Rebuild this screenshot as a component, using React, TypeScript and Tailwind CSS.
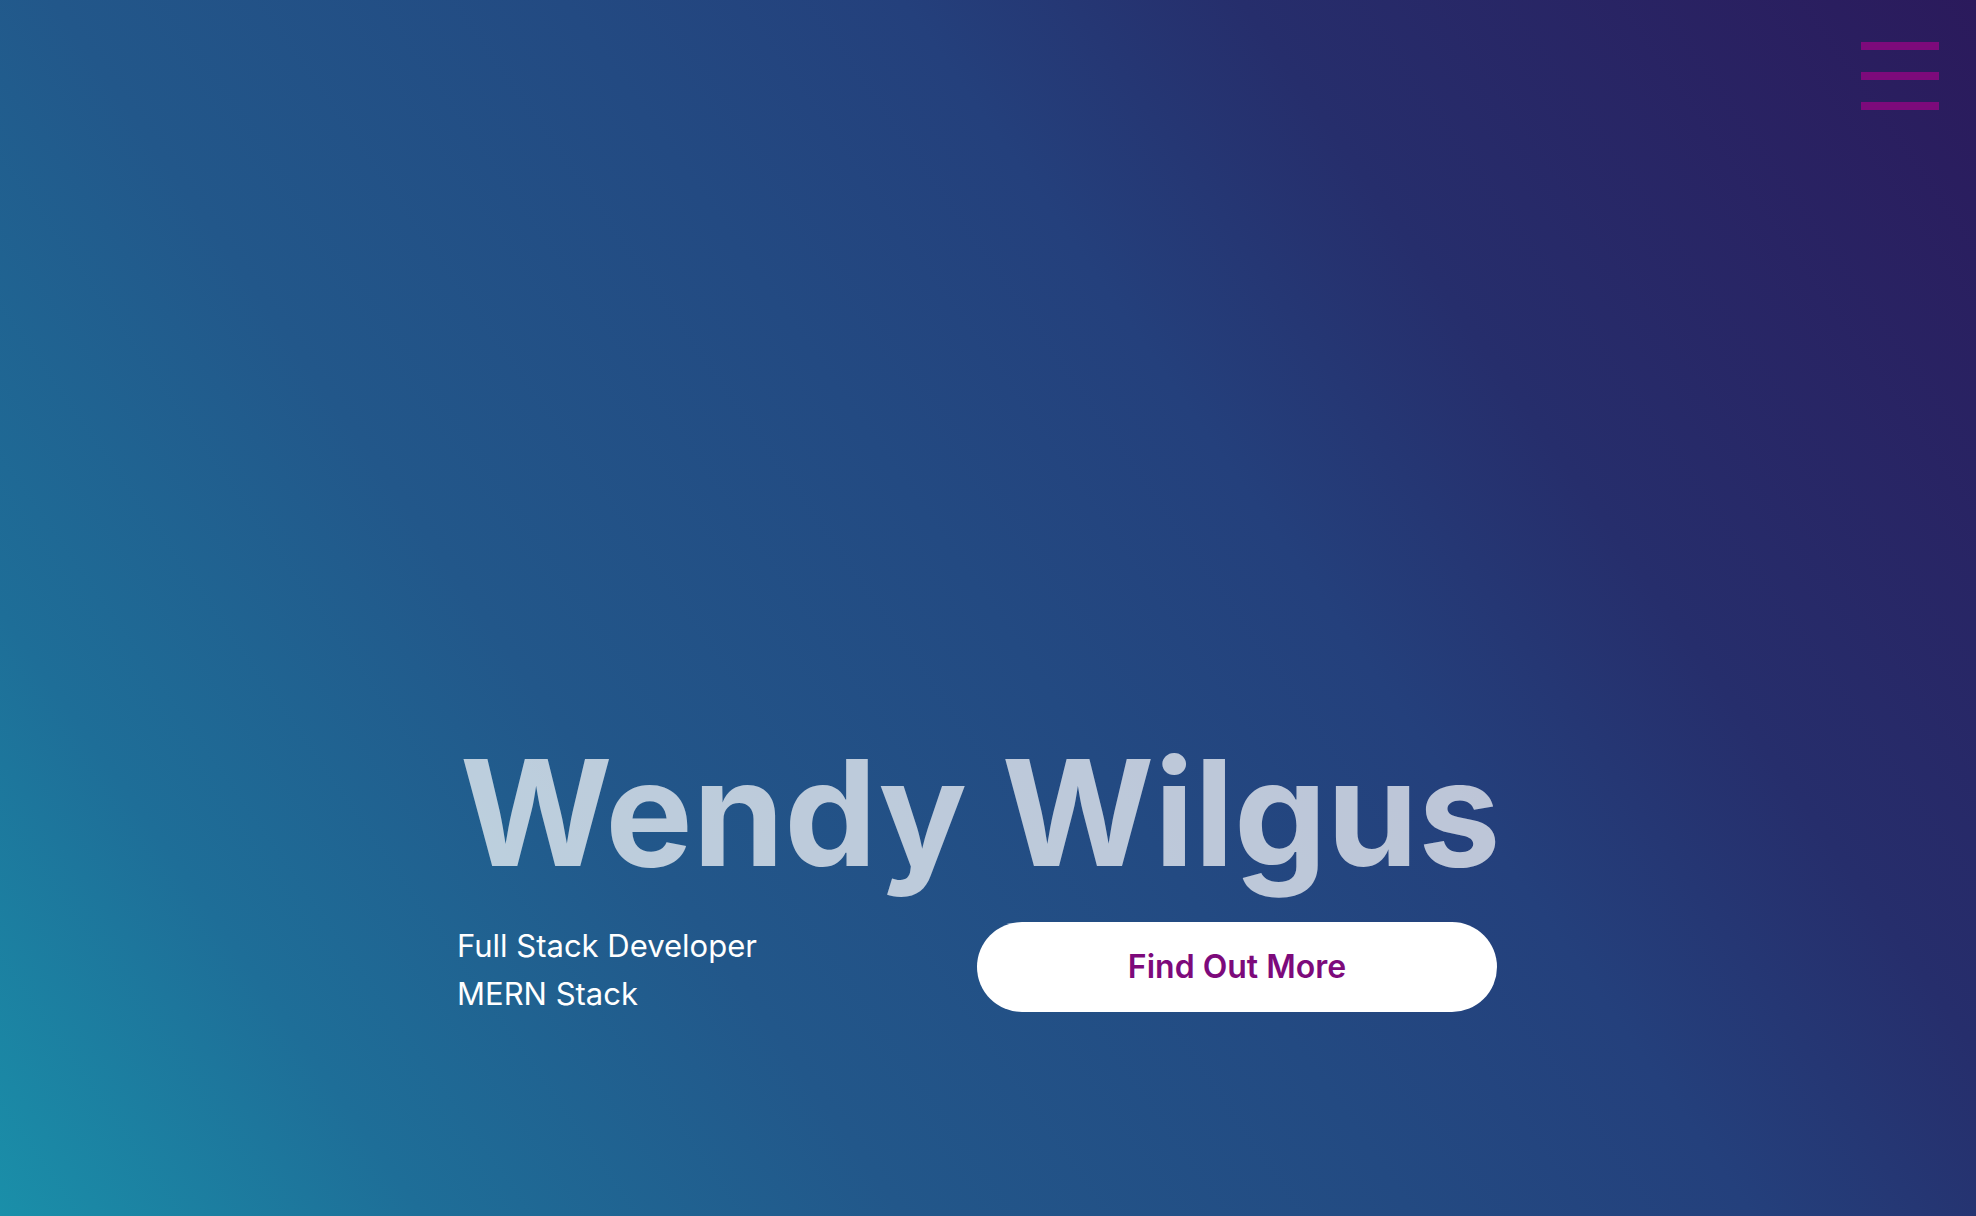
import React from 'react';

const font = { fontFamily: 'Inter, "Noto Sans", sans-serif' };

function MenuButton() {
  return (
    <button aria-label="Open menu" className="flex flex-col gap-[22px] w-[78px]">
      <span className="block h-[8px] w-full bg-[#7d0a7b]" />
      <span className="block h-[8px] w-full bg-[#7d0a7b]" />
      <span className="block h-[8px] w-full bg-[#7d0a7b]" />
    </button>
  );
}

export default function App() {
  return (
    <div
      style={font}
      className="h-[1216px] w-full overflow-hidden flex flex-col bg-[linear-gradient(55deg,#1a8fa9_0%,#1e6e98_15%,#22578a_32%,#234a82_50%,#24407c_62%,#262e6c_74%,#2b1a5c_100%)]"
    >
      {/* Header */}
      <header className="flex justify-end pt-[42px] pr-[37px]">
        <MenuButton />
      </header>

      {/* Hero */}
      <main className="flex-1 flex flex-col justify-end pb-[198px]">
        <div className="ml-[457px] w-[1040px]">
          <h1 className="text-[147px] leading-none font-bold whitespace-nowrap text-white/70 pl-[3px]">
            Wendy Wilgus
          </h1>
          <div className="grid grid-cols-2 mt-[36px]">
            <div className="text-[31px] leading-[48px] text-white">
              <p>Full Stack Developer</p>
              <p>MERN Stack</p>
            </div>
            <div>
              <button className="w-full h-[90px] rounded-full bg-white text-[#7d0a7b] text-[32px] font-semibold">
                Find Out More
              </button>
            </div>
          </div>
        </div>
      </main>
    </div>
  );
}
